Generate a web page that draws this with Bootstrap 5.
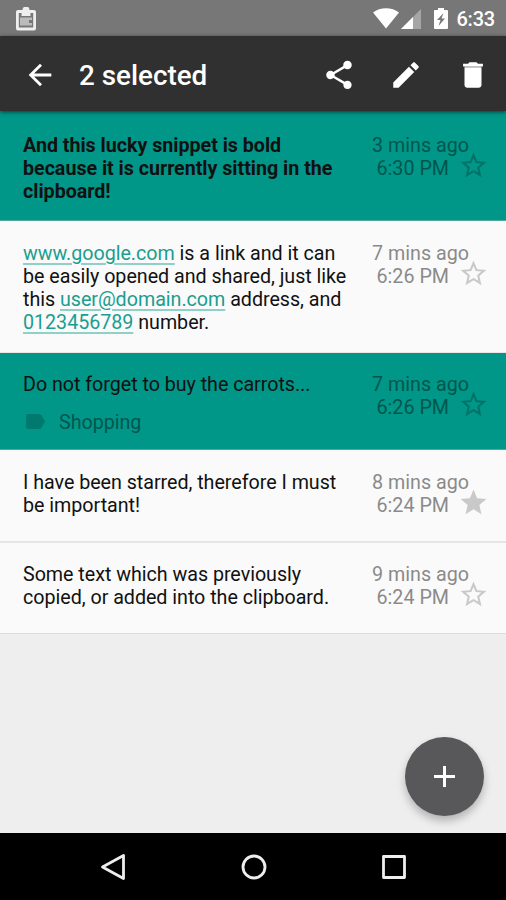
<!DOCTYPE html>
<html lang="en">
<head>
<meta charset="utf-8">
<meta name="viewport" content="width=device-width, initial-scale=1">
<title>Clipboard</title>
<link href="https://cdn.jsdelivr.net/npm/bootstrap@5.3.0/dist/css/bootstrap.min.css" rel="stylesheet">
<style>
  body { font-family: Roboto, "Liberation Sans", sans-serif; background: #eee; color: #111; font-size: 19.7px; line-height: 23px; }
  svg { display: block; fill: currentColor; flex: none; }
  .screen { height: 900px; overflow: hidden; }
  .status { height: 36px; background: #777; color: #fff; padding: 1px 11px 0 9px; }
  .signal { margin-left: 2px; }
  .battery { margin-left: 13px; }
  .clock { font-size: 20px; font-weight: 500; margin-left: 8px; margin-top: 2px; letter-spacing: -.2px; }
  .appbar { height: 75px; background: #303030; color: #fff; padding: 2px 16px 0 23px; box-shadow: 0 1px 4px rgba(0,0,0,.6); z-index: 2; }
  .appbar h1 { font-size: 27.8px; font-weight: 500; line-height: 32px; margin: 3px 0 0 22px; }
  .actions { gap: 33px; }
  .clip { padding: 20px 0 0 23px; background: #fafafa; border-bottom: 2px solid #e6e6e6; }
  .picked { background: #009688; border-bottom-color: #4fa89d; border-bottom-width: 1px; }
  .snippet { letter-spacing: -.03px; }
  .clip a { color: #199e90; text-decoration-color: #8fd0c9; text-underline-offset: 3px; text-decoration-thickness: 2px; }
  .stamp { width: 97px; margin-right: 37px; color: #8a8a8a; }
  .picked .stamp, .picked .tagline { color: #00564e; }
  .hour { padding-right: 20px; white-space: nowrap; }
  .star { right: -20px; top: 16px; color: #c9c9c9; }
  .picked .star { color: #007368; }
  .tagline { gap: 13px; margin-top: 15px; }
  .tagline svg { color: #007a6e; margin-bottom: 3px; }
  .h-a { height: 110px; padding-top: 23px; }
  .h-b { height: 132px; padding-top: 21px; border-bottom-width: 1px; }
  .h-c { height: 97px; }
  .h-d { height: 93px; padding-top: 21px; }
  .h-e { height: 91px; border-bottom-width: 1px; border-bottom-color: #ddd; }
  .fab { width: 79px; height: 79px; right: 22px; bottom: 17px; background: #58585a; color: #fff; box-shadow: 0 5px 8px rgba(0,0,0,.25); }
  .sysnav { height: 67px; background: #000; color: #eee; padding: 1px 98px 0 99px; }
  .sysnav svg { fill: none; stroke: currentColor; stroke-width: 2.8; stroke-linejoin: round; }
</style>
<script src="https://cdn.jsdelivr.net/npm/bootstrap@5.3.0/dist/js/bootstrap.bundle.min.js"></script>
</head>
<body>
<svg class="d-none">
  <symbol id="star" viewBox="0 0 24 24"><path d="M22 9.240l-7.190-.62L12 2 9.190 8.630 2 9.240l5.460 4.730L5.820 21 12 17.270 18.180 21l-1.630-7.030L22 9.240zM12 15.400l-3.760 2.270 1-4.280-3.320-2.880 4.380-.38L12 6.100l1.710 4.040 4.380.38-3.320 2.880 1 4.280L12 15.400z"/></symbol>
  <symbol id="star-full" viewBox="0 0 24 24"><path d="M12 17.270L18.180 21l-1.640-7.030L22 9.240l-7.190-.61L12 2 9.190 8.630 2 9.240l5.460 4.730L5.820 21z"/></symbol>
</svg>
<div class="screen d-flex flex-column">
  <div class="status d-flex align-items-center">
    <svg width="34" height="24" viewBox="0 0 34 24"><path fill="#eee" fill-rule="evenodd" d="M9 3h4.500a3.500 3.500 0 0 1 7 0H25a2 2 0 0 1 2 2v16.500a2 2 0 0 1-2 2H9a2 2 0 0 1-2-2V5a2 2 0 0 1 2-2zm.8 3v14.500h14.400V6h-2.700v3h-9V6z"/><path fill="#bbb" d="M11 10.500h12v2.500H11zM11 13h9v3h-9zM11 16h12v2.500H11z"/></svg>
    <svg class="ms-auto" width="26" height="21" viewBox="0 0 26 21"><path d="M0 4.500C7-1.300 19-1.300 26 4.500L13 20.500z"/></svg>
    <svg class="signal" width="20" height="20" viewBox="0 0 20 20"><path opacity=".35" d="M20 0v20H0z"/><path d="M12 8v12H0z"/></svg>
    <svg class="battery" width="14" height="21" viewBox="0 0 14 21"><path fill-rule="evenodd" d="M4 0h6v2h3a1 1 0 0 1 1 1v17a1 1 0 0 1-1 1H1a1 1 0 0 1-1-1V3a1 1 0 0 1 1-1h3zM9.500 5l-6.500 7h3.500L4.500 18l6.500-7.500H7.500z"/></svg>
    <span class="clock">6:33</span>
  </div>
  <header class="appbar d-flex align-items-center position-relative">
    <svg width="34" height="34" viewBox="0 0 24 24"><path d="M20 11H7.830l5.590-5.590L12 4l-8 8 8 8 1.410-1.410L7.830 13H20v-2z"/></svg>
    <h1>2 selected</h1>
    <div class="actions d-flex ms-auto">
      <svg width="34" height="34" viewBox="0 0 24 24"><path d="M18 16.080c-.76 0-1.440.3-1.960.77L8.910 12.700c.05-.23.09-.46.09-.7s-.04-.47-.09-.7l7.050-4.110c.54.5 1.250.81 2.040.81 1.660 0 3-1.340 3-3s-1.340-3-3-3-3 1.340-3 3c0 .24.04.47.09.7L8.040 9.810C7.500 9.310 6.790 9 6 9c-1.660 0-3 1.340-3 3s1.340 3 3 3c.79 0 1.500-.31 2.040-.81l7.120 4.160c-.05.21-.08.43-.08.65 0 1.610 1.310 2.920 2.920 2.920s2.920-1.310 2.920-2.920-1.310-2.920-2.920-2.920z"/></svg>
      <svg width="34" height="34" viewBox="0 0 24 24"><path d="M3 17.250V21h3.750L17.810 9.940l-3.750-3.750L3 17.250zM20.710 7.040c.39-.39.39-1.020 0-1.410l-2.340-2.340c-.39-.39-1.020-.39-1.410 0l-1.830 1.830 3.750 3.750 1.830-1.830z"/></svg>
      <svg width="34" height="34" viewBox="0 0 24 24"><path d="M6 19c0 1.100.9 2 2 2h8c1.100 0 2-.9 2-2V7H6v12zM19 4h-3.500l-1-1h-5l-1 1H5v2h14V4z"/><path opacity=".8" d="M6 6h12v1H6z"/></svg>
    </div>
  </header>
  <main class="flex-grow-1 position-relative">
    <article class="clip picked h-a d-flex justify-content-between">
      <div class="snippet fw-bold">And this lucky snippet is bold<br>because it is currently sitting in the<br>clipboard!</div>
      <div class="stamp text-end position-relative"><div class="text-nowrap">3 mins ago</div><div class="hour">6:30 PM</div><svg class="star position-absolute" width="31" height="31"><use href="#star"/></svg></div>
    </article>
    <article class="clip h-b d-flex justify-content-between">
      <div class="snippet"><a href="#">www.google.com</a> is a link and it can<br>be easily opened and shared, just like<br>this <a href="#">user@domain.com</a> address, and<br><a href="#">0123456789</a> number.</div>
      <div class="stamp text-end position-relative"><div class="text-nowrap">7 mins ago</div><div class="hour">6:26 PM</div><svg class="star position-absolute" width="31" height="31"><use href="#star"/></svg></div>
    </article>
    <article class="clip picked h-c d-flex justify-content-between">
      <div class="snippet">Do not forget to buy the carrots...
        <div class="tagline d-flex align-items-center"><svg width="23" height="15" viewBox="0 0 23 15"><path d="M5 0h10.500q2 0 3.200 1.600L22 7.500l-3.300 5.900Q17.500 15 15.500 15H5q-2 0-2-2V2q0-2 2-2z"/></svg>Shopping</div>
      </div>
      <div class="stamp text-end position-relative"><div class="text-nowrap">7 mins ago</div><div class="hour">6:26 PM</div><svg class="star position-absolute" width="31" height="31"><use href="#star"/></svg></div>
    </article>
    <article class="clip h-d d-flex justify-content-between">
      <div class="snippet">I have been starred, therefore I must<br>be important!</div>
      <div class="stamp text-end position-relative"><div class="text-nowrap">8 mins ago</div><div class="hour">6:24 PM</div><svg class="star position-absolute" width="31" height="31"><use href="#star-full"/></svg></div>
    </article>
    <article class="clip h-e d-flex justify-content-between">
      <div class="snippet">Some text which was previously<br>copied, or added into the clipboard.</div>
      <div class="stamp text-end position-relative"><div class="text-nowrap">9 mins ago</div><div class="hour">6:24 PM</div><svg class="star position-absolute" width="31" height="31"><use href="#star"/></svg></div>
    </article>
    <button class="fab btn rounded-circle border-0 p-0 position-absolute d-flex align-items-center justify-content-center" aria-label="Add"><svg width="21" height="21" viewBox="0 0 21 21"><path d="M9 0h3v9h9v3h-9v9H9v-9H0V9h9z"/></svg></button>
  </main>
  <nav class="sysnav d-flex align-items-center justify-content-between">
    <svg width="28" height="28" viewBox="0 0 28 28"><path d="M3.500 14L24.500 2.500v23z"/></svg>
    <svg width="28" height="28" viewBox="0 0 28 28"><circle cx="14" cy="14" r="11"/></svg>
    <svg width="28" height="28" viewBox="0 0 28 28"><path d="M3.500 3.500h21v21h-21z"/></svg>
  </nav>
</div>
</body>
</html>
